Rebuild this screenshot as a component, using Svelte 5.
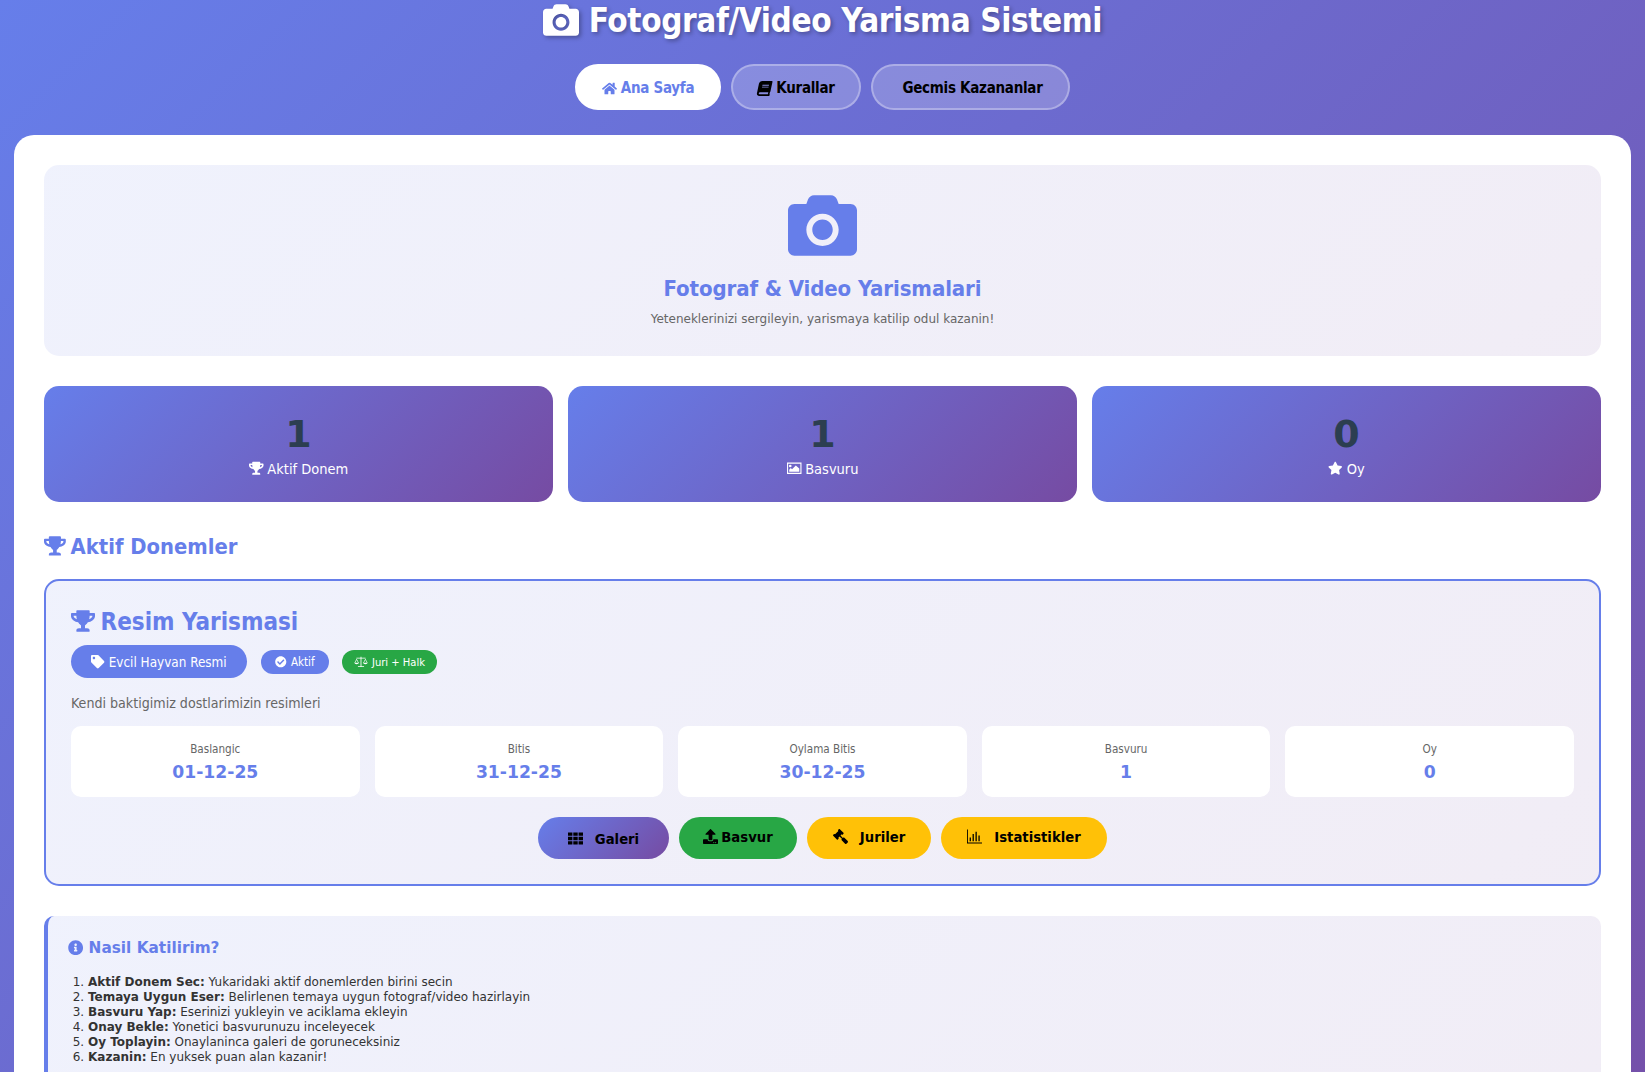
<script>
  const icons = {
    camera: ['0 0 512 512', 'M512 144v288c0 26.5-21.5 48-48 48H48c-26.5 0-48-21.5-48-48V144c0-26.5 21.5-48 48-48h88l12.3-32.9c7-18.7 24.9-31.1 44.9-31.1h125.5c20 0 37.9 12.4 44.9 31.1L376 96h88c26.5 0 48 21.5 48 48zM376 288c0-66.2-53.8-120-120-120s-120 53.8-120 120 53.8 120 120 120 120-53.8 120-120zm-44 0c0 42-34 76-76 76s-76-34-76-76 34-76 76-76 76 34 76 76z'],
    trophy: ['0 0 576 512', 'M552 64H448V24c0-13.3-10.7-24-24-24H152c-13.3 0-24 10.7-24 24v40H24C10.7 64 0 74.7 0 88v56c0 35.7 22.5 72.4 61.9 100.7 31.5 22.7 69.8 37.1 110 41.7C203.3 338.5 240 360 240 360v72h-48c-35.3 0-64 20.7-64 56v12c0 6.6 5.4 12 12 12h296c6.6 0 12-5.4 12-12v-12c0-35.3-28.7-56-64-56h-48v-72s36.7-21.5 68.1-73.6c40.3-4.6 78.7-19 110-41.7 39.3-28.3 61.9-65 61.9-100.7V88c0-13.3-10.7-24-24-24zM99.3 192.8C74.9 175.2 64 155.6 64 144v-16h64.2c1 32.6 5.8 61.2 12.8 86.2-15.1-5.2-29.2-12.4-41.7-21.4zM512 144c0 16.1-17.7 36.1-35.3 48.8-12.5 9-26.7 16.2-41.8 21.4 7-25 11.8-53.6 12.8-86.2H512v16z'],
    home: ['0 0 576 512', 'M280.37 148.26L96 300.11V464a16 16 0 0 0 16 16l112.06-.29a16 16 0 0 0 15.92-16V368a16 16 0 0 1 16-16h64a16 16 0 0 1 16 16v95.64a16 16 0 0 0 16 16.05L464 480a16 16 0 0 0 16-16V300L295.67 148.26a12.19 12.19 0 0 0-15.3 0zM571.6 251.47L488 182.56V44.05a12 12 0 0 0-12-12h-56a12 12 0 0 0-12 12v72.61L318.47 43a48 48 0 0 0-61 0L4.34 251.47a12 12 0 0 0-1.6 16.9l25.5 31A12 12 0 0 0 45.15 301l235.22-193.74a12.19 12.19 0 0 1 15.3 0L530.9 301a12 12 0 0 0 16.9-1.6l25.5-31a12 12 0 0 0-1.7-16.93z'],
    book: ['0 0 448 512', 'M448 360V24c0-13.3-10.7-24-24-24H96C43 0 0 43 0 96v320c0 53 43 96 96 96h328c13.3 0 24-10.7 24-24v-16c0-7.5-3.5-14.3-8.9-18.7-4.2-15.4-4.2-59.3 0-74.7 5.4-4.3 8.9-11.1 8.9-18.6zM128 134c0-3.3 2.7-6 6-6h212c3.3 0 6 2.7 6 6v20c0 3.3-2.7 6-6 6H134c-3.3 0-6-2.7-6-6v-20zm0 64c0-3.3 2.7-6 6-6h212c3.3 0 6 2.7 6 6v20c0 3.3-2.7 6-6 6H134c-3.3 0-6-2.7-6-6v-20zm253.4 250H96c-17.7 0-32-14.3-32-32 0-17.6 14.4-32 32-32h285.4c-1.9 17.1-1.9 46.9 0 64z'],
    star: ['0 0 576 512', 'M259.3 17.8L194 150.2 47.9 171.5c-26.2 3.8-36.7 36.1-17.7 54.6l105.7 103-25 145.5c-4.5 26.3 23.2 46 46.4 33.7L288 439.6l130.7 68.7c23.2 12.2 50.9-7.4 46.4-33.7l-25-145.5 105.7-103c19-18.5 8.5-50.8-17.7-54.6L382 150.2 316.7 17.8c-11.7-23.6-45.6-23.9-57.4 0z'],
    image: ['0 0 576 512', 'M0 32v448h576V32H0zm44 44h488v360H44V76zm86 40a52 52 0 1 0 0 104 52 52 0 0 0 0-104zm220 30L200 300l-50-50-62 66v76h400V270L350 146z'],
    tag: ['0 0 512 512', 'M0 252.118V48C0 21.49 21.49 0 48 0h204.118a48 48 0 0 1 33.941 14.059l211.882 211.882c18.745 18.745 18.745 49.137 0 67.882L293.823 497.941c-18.745 18.745-49.137 18.745-67.882 0L14.059 286.059A48 48 0 0 1 0 252.118zM112 64c-26.51 0-48 21.49-48 48s21.49 48 48 48 48-21.49 48-48-21.49-48-48-48z'],
    check: ['0 0 512 512', 'M504 256c0 136.967-111.033 248-248 248S8 392.967 8 256 119.033 8 256 8s248 111.033 248 248zM227.314 387.314l184-184c6.248-6.248 6.248-16.379 0-22.627l-22.627-22.627c-6.248-6.249-16.379-6.249-22.628 0L216 308.118l-70.059-70.059c-6.248-6.248-16.379-6.248-22.628 0l-22.627 22.627c-6.248 6.248-6.248 16.379 0 22.627l104 104c6.249 6.249 16.379 6.249 22.628.001z'],
    info: ['0 0 512 512', 'M256 8C119.043 8 8 119.083 8 256c0 136.997 111.043 248 248 248s248-111.003 248-248C504 119.083 392.957 8 256 8zm0 110c23.196 0 42 18.804 42 42s-18.804 42-42 42-42-18.804-42-42 18.804-42 42-42zm56 254c0 6.627-5.373 12-12 12h-88c-6.627 0-12-5.373-12-12v-24c0-6.627 5.373-12 12-12h12v-64h-12c-6.627 0-12-5.373-12-12v-24c0-6.627 5.373-12 12-12h64c6.627 0 12 5.373 12 12v100h12c6.627 0 12 5.373 12 12v24z'],
    upload: ['0 0 512 512', 'M296 384h-80c-13.3 0-24-10.7-24-24V192h-87.7c-17.8 0-26.7-21.5-14.1-34.1L242.3 5.7c7.5-7.5 19.8-7.5 27.3 0l152.2 152.2c12.6 12.6 3.7 34.1-14.1 34.1H320v168c0 13.3-10.7 24-24 24zm216-8v112c0 13.3-10.7 24-24 24H24c-13.3 0-24-10.7-24-24V376c0-13.3 10.7-24 24-24h136v8c0 30.9 25.1 56 56 56h80c30.9 0 56-25.1 56-56v-8h136c13.3 0 24 10.7 24 24zm-124 88c0-11-9-20-20-20s-20 9-20 20 9 20 20 20 20-9 20-20zm64 0c0-11-9-20-20-20s-20 9-20 20 9 20 20 20 20-9 20-20z'],
    gavel: ['0 0 512 512', 'M504.971 199.362l-22.627-22.627c-9.373-9.373-24.569-9.373-33.941 0l-5.657 5.657L329.608 69.255l5.657-5.657c9.373-9.373 9.373-24.569 0-33.941L312.638 7.029c-9.373-9.373-24.569-9.373-33.941 0L154.246 131.48c-9.373 9.373-9.373 24.569 0 33.941l22.627 22.627c9.373 9.373 24.569 9.373 33.941 0l5.657-5.657 39.598 39.598-81.04 81.04-5.657-5.657c-12.497-12.497-32.758-12.497-45.255 0L9.373 412.118c-12.497 12.497-12.497 32.758 0 45.255l45.255 45.255c12.497 12.497 32.758 12.497 45.255 0l114.745-114.745c12.497-12.497 12.497-32.758 0-45.255l-5.657-5.657 81.04-81.04 39.598 39.598-5.657 5.657c-9.373 9.373-9.373 24.569 0 33.941l22.627 22.627c9.373 9.373 24.569 9.373 33.941 0l124.451-124.451c9.372-9.372 9.372-24.568 0-33.941z'],
    grid: ['0 0 512 512', 'M0 48h150v112H0zM181 48h150v112H181zM362 48h150v112H362zM0 200h150v112H0zM181 200h150v112H181zM362 200h150v112H362zM0 352h150v112H0zM181 352h150v112H181zM362 352h150v112H362z'],
    chart: ['0 0 512 512', 'M0 20h30v440h482v32H0zM90 290h44v130H90zM190 170h44v250h-44zM290 90h44v330h-44zM390 220h44v200h-44z'],
    scale: ['0 0 640 512', 'M300 20h40v44h190v30H340v356h120v40H180v-40h120V94H110V64h190zM120 110l100 185c0 38-45 62-100 62S20 333 20 295zm0 52l-72 133h144zM520 110l100 185c0 38-45 62-100 62s-100-24-100-62zm0 52l-72 133h144z']
  };

  const stats = [
    { num: '1', icon: 'trophy', label: 'Aktif Donem' },
    { num: '1', icon: 'image', label: 'Basvuru' },
    { num: '0', icon: 'star', label: 'Oy' }
  ];
  const details = [
    { label: 'Baslangic', value: '01-12-25' },
    { label: 'Bitis', value: '31-12-25' },
    { label: 'Oylama Bitis', value: '30-12-25' },
    { label: 'Basvuru', value: '1' },
    { label: 'Oy', value: '0' }
  ];
  const steps = [
    ['Aktif Donem Sec:', 'Yukaridaki aktif donemlerden birini secin'],
    ['Temaya Uygun Eser:', 'Belirlenen temaya uygun fotograf/video hazirlayin'],
    ['Basvuru Yap:', 'Eserinizi yukleyin ve aciklama ekleyin'],
    ['Onay Bekle:', 'Yonetici basvurunuzu inceleyecek'],
    ['Oy Toplayin:', 'Onaylaninca galeri de goruneceksiniz'],
    ['Kazanin:', 'En yuksek puan alan kazanir!']
  ];
</script>

{#snippet icon(name, cls = '')}
  <svg class="ic {cls}" viewBox={icons[name][0]} aria-hidden="true"><path d={icons[name][1]} fill="currentColor" fill-rule="evenodd" /></svg>
{/snippet}

<div class="page">
  <header>
    <h1>{@render icon('camera')} Fotograf/Video Yarisma Sistemi</h1>
    <nav>
      <a class="active" href="#home">{@render icon('home')} Ana Sayfa</a>
      <a href="#rules">{@render icon('book', 'slant')} Kurallar</a>
      <a class="wide" href="#past">Gecmis Kazananlar</a>
    </nav>
  </header>

  <main>
    <section class="hero">
      {@render icon('camera', 'hero-ic')}
      <h2>Fotograf &amp; Video Yarismalari</h2>
      <p>Yeteneklerinizi sergileyin, yarismaya katilip odul kazanin!</p>
    </section>

    <section class="stats">
      {#each stats as s}
        <div class="stat">
          <div class="num">{s.num}</div>
          <div class="lbl">{@render icon(s.icon)} {s.label}</div>
        </div>
      {/each}
    </section>

    <h3 class="section-title">{@render icon('trophy')} Aktif Donemler</h3>

    <article class="period">
      <h4>{@render icon('trophy')} Resim Yarismasi</h4>
      <div class="chips">
        <span class="chip theme">{@render icon('tag')} Evcil Hayvan Resmi</span>
        <span class="chip status">{@render icon('check')} Aktif</span>
        <span class="chip mode">{@render icon('scale')} Juri + Halk</span>
      </div>
      <p class="desc">Kendi baktigimiz dostlarimizin resimleri</p>
      <div class="details">
        {#each details as d}
          <div class="detail">
            <div class="d-label">{d.label}</div>
            <div class="d-value">{d.value}</div>
          </div>
        {/each}
      </div>
      <div class="actions">
        <a class="btn gallery" href="#g">{@render icon('grid')} <span class="sp">Galeri</span></a>
        <a class="btn apply" href="#a">{@render icon('upload')} Basvur</a>
        <a class="btn warn jury" href="#j">{@render icon('gavel', 'flip')} <span class="sp">Juriler</span></a>
        <a class="btn warn statsb" href="#s">{@render icon('chart')} <span class="sp">Istatistikler</span></a>
      </div>
    </article>

    <section class="info">
      <h5>{@render icon('info')} Nasil Katilirim?</h5>
      <ol>
        {#each steps as st}
          <li><strong>{st[0]}</strong> {st[1]}</li>
        {/each}
      </ol>
    </section>
  </main>
</div>

<style>
  :global(body) {
    margin: 0;
    height: 1072px;
    overflow: hidden;
    background: linear-gradient(135deg, #667eea 0%, #764ba2 100%);
    background-size: 100% 1400px;
    background-repeat: no-repeat;
    font-family: "DejaVu Sans Condensed", "DejaVu Sans", sans-serif;
    font-stretch: condensed;
  }
  .ic {
    width: 1em;
    height: 1em;
    vertical-align: -0.125em;
    overflow: visible;
  }
  :global(.slant) { transform: skewX(-12deg); }
  :global(.flip) { transform: scaleX(-1); }

  header { text-align: center; }
  h1 {
    margin: 0;
    height: 40px;
    line-height: 42px;
    font-size: 33px;
    letter-spacing: -0.4px;
    font-weight: 700;
    color: #fff;
    text-shadow: 2px 2px 4px rgba(0, 0, 0, 0.3);
  }
  h1 .ic {
    width: 36px;
    height: 36px;
    vertical-align: -6px;
    filter: drop-shadow(2px 2px 2px rgba(0, 0, 0, 0.3));
  }
  nav {
    display: flex;
    justify-content: center;
    gap: 10px;
    margin-top: 24px;
  }
  nav a {
    display: flex;
    align-items: center;
    justify-content: center;
    gap: 4px;
    box-sizing: border-box;
    height: 46px;
    width: 130px;
    padding-top: 2px;
    border: 2px solid rgba(255, 255, 255, 0.3);
    border-radius: 25px;
    background: rgba(255, 255, 255, 0.2);
    color: #000;
    font-size: 15px;
    letter-spacing: -0.28px;
    font-weight: 700;
    text-decoration: none;
  }
  nav a.active {
    width: 146px;
    background: #fff;
    border-color: #fff;
    color: #667eea;
  }
  nav a.wide { width: 199px; padding-left: 4px; }

  main {
    margin: 25px 14px 0;
    padding: 30px;
    height: 1000px;
    box-sizing: border-box;
    background: #fff;
    border-radius: 20px;
  }

  .hero {
    box-sizing: border-box;
    height: 191px;
    padding-top: 26px;
    text-align: center;
    border-radius: 15px;
    background: linear-gradient(135deg, rgba(102, 126, 234, 0.1), rgba(118, 75, 162, 0.1));
  }
  :global(.hero-ic) {
    display: block;
    margin: 0 auto;
    width: 69px !important;
    height: 69px !important;
    color: #667eea;
  }
  .hero h2 {
    margin: 14px 0 0;
    font-size: 22px;
    letter-spacing: -0.1px;
    line-height: 30px;
    color: #667eea;
  }
  .hero p {
    margin: 7px 0 0;
    font-size: 12px;
    line-height: 16px;
    color: #666;
    font-stretch: normal;
    font-family: "DejaVu Sans", sans-serif;
  }

  .stats {
    display: grid;
    grid-template-columns: repeat(3, 1fr);
    gap: 15px;
    margin-top: 30px;
  }
  .stat {
    box-sizing: border-box;
    height: 116px;
    padding-top: 28px;
    text-align: center;
    border-radius: 15px;
    background: linear-gradient(135deg, #667eea, #764ba2);
    color: #fff;
  }
  .num {
    font-size: 38px;
    line-height: 40px;
    font-weight: 700;
    color: #2c3e50;
    font-family: "DejaVu Sans", sans-serif;
    font-stretch: normal;
  }
  .lbl {
    margin-top: 5px;
    font-size: 14.5px;
    line-height: 20px;
  }

  .section-title {
    margin: 31px 0 0;
    font-size: 21.8px;
    line-height: 28px;
    color: #667eea;
  }
  .section-title .ic { margin-right: -2px; }

  .period {
    box-sizing: border-box;
    height: 307px;
    margin-top: 18px;
    padding: 25px;
    border: 2px solid #667eea;
    border-radius: 15px;
    background: linear-gradient(135deg, rgba(102, 126, 234, 0.1), rgba(118, 75, 162, 0.1));
  }
  .period h4 {
    margin: 0;
    padding-top: 1px;
    font-size: 24px;
    line-height: 30px;
    color: #667eea;
  }
  .period h4 .ic { width: 24px; height: 24px; margin-right: -2px; vertical-align: -3px; }
  .chips {
    display: flex;
    align-items: center;
    gap: 14px;
    margin-top: 8px;
    height: 33px;
    color: #fff;
  }
  .chip {
    display: inline-flex;
    align-items: center;
    justify-content: center;
    gap: 4px;
    box-sizing: border-box;
    padding-top: 1px;
    border-radius: 20px;
    color: #fff;
  }
  .theme { width: 176px; height: 33px; background: #667eea; font-size: 13.4px; }
  .status { width: 68px; height: 24px; background: #667eea; font-size: 11.5px; }
  .mode { width: 95px; height: 24px; margin-left: -1px; background: #28a745; font-size: 11.1px; }
  .mode .ic { width: 14px; height: 12px; }

  .desc {
    margin: 15px 0 0;
    font-size: 14.1px;
    line-height: 20px;
    color: #666;
  }

  .details {
    display: grid;
    grid-template-columns: repeat(5, 1fr);
    gap: 15px;
    margin-top: 13px;
  }
  .detail {
    box-sizing: border-box;
    height: 71px;
    padding-top: 15px;
    text-align: center;
    background: #fff;
    border-radius: 10px;
  }
  .d-label {
    font-size: 11.6px;
    line-height: 16px;
    color: #666;
  }
  .d-value {
    margin-top: 4px;
    font-size: 17.2px;
    line-height: 22px;
    font-weight: 700;
    color: #667eea;
    font-family: "DejaVu Sans", sans-serif;
    font-stretch: normal;
  }

  .actions {
    display: flex;
    justify-content: center;
    gap: 10px;
    margin-top: 20px;
  }
  .btn {
    display: flex;
    align-items: center;
    justify-content: center;
    gap: 3px;
    box-sizing: border-box;
    height: 42px;
    border-radius: 21px;
    color: #000;
    font-size: 14.7px;
    font-weight: 700;
    text-decoration: none;
  }
  .btn .ic { width: 15px; height: 15px; }
  .sp { margin-left: 9px; }
  .gallery { width: 131px; background: linear-gradient(135deg, #667eea, #764ba2); }
  .apply { width: 118px; background: #28a745; padding-bottom: 3px; }
  .jury { width: 124px; padding-bottom: 3px; }
  .statsb { width: 166px; padding-bottom: 3px; }
  .warn { background: #ffc107; }

  .info {
    box-sizing: border-box;
    margin-top: 30px;
    height: 260px;
    padding: 22px 20px;
    border-left: 4px solid #667eea;
    border-radius: 10px;
    background: linear-gradient(135deg, rgba(102, 126, 234, 0.1), rgba(118, 75, 162, 0.1));
  }
  .info h5 {
    margin: 0;
    font-size: 15.3px;
    line-height: 20px;
    color: #667eea;
    font-family: "DejaVu Sans", sans-serif;
    font-stretch: normal;
  }
  ol {
    margin: 17px 0 0;
    padding-left: 20px;
    font-family: "DejaVu Sans", sans-serif;
    font-stretch: normal;
    font-size: 12px;
    line-height: 15px;
    color: #333;
  }
</style>
